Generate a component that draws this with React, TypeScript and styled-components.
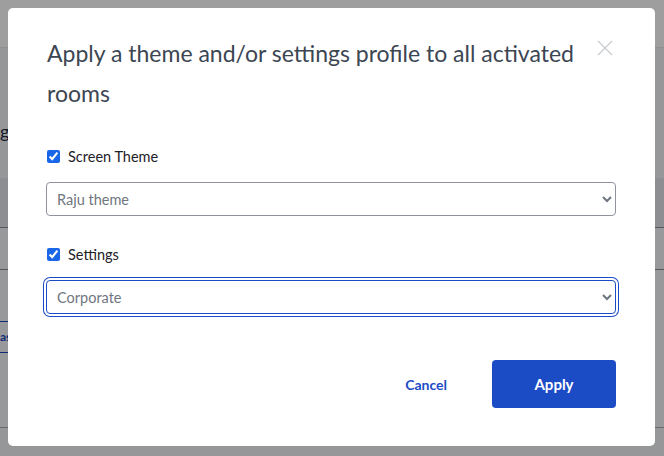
import React from 'react'
import styled, { createGlobalStyle } from 'styled-components'

const GlobalStyle = createGlobalStyle`
  html, body {
    margin: 0;
    padding: 0;
    width: 664px;
    height: 456px;
    overflow: hidden;
    font-family: Lato, 'Open Sans', Arial, sans-serif;
    background: #f3f4f6;
  }
  * {
    box-sizing: border-box;
  }
`

// ---- page behind the dialog ----

const Page = styled.div`
  display: flex;
  flex-direction: column;
  width: 664px;
  height: 456px;
`

const TopBar = styled.div`
  height: 48px;
  background: #fff;
  border-bottom: 1px solid #e3e5e8;
`

const PageHeading = styled.div`
  height: 130px;
  padding-top: 72px;
  font-size: 18px;
  color: #1f2a44;
`

const TableHead = styled.div`
  height: 50px;
  background: #e4e6ea;
  border-bottom: 1px solid #8b8f96;
`

const TableRow = styled.div<{ h: number }>`
  height: ${({ h }) => h}px;
  border-bottom: 1px solid #8b8f96;
  background: #f6f7f8;
`

const TabStrip = styled.div`
  display: flex;
  height: 158px;
  background: #f6f7f8;
  border-bottom: 1px solid #a9adb3;
  padding-top: 51px;
`

const ActiveTab = styled.div`
  height: 32px;
  width: 40px;
  border-top: 1px solid #2048c0;
  border-bottom: 1px solid #2048c0;
  color: #2048c0;
  font-weight: 700;
  font-size: 12px;
  line-height: 30px;
`

// ---- dialog ----

const Backdrop = styled.div`
  position: fixed;
  inset: 0;
  background: rgba(0, 0, 0, 0.38);
  display: flex;
  align-items: flex-start;
  justify-content: flex-start;
  padding: 8px 0 0 8px;
`

const Dialog = styled.div`
  width: 647px;
  height: 438px;
  background: #fff;
  border-radius: 5px;
  padding: 25px 39px 38px 38px;
  display: flex;
  flex-direction: column;
`

const HeaderRow = styled.div`
  display: flex;
  align-items: flex-start;
`

const Title = styled.h2`
  flex: 1;
  margin: 0;
  padding-left: 1px;
  padding-right: 16px;
  font-size: 23px;
  font-weight: 400;
  line-height: 40px;
  color: #3c4653;
`

const CloseButton = styled.button`
  border: none;
  background: none;
  padding: 0;
  margin: 7px 3px 0 0;
  width: 16px;
  height: 16px;
  cursor: pointer;
  display: flex;
`

const Section = styled.div<{ top: number }>`
  display: flex;
  flex-direction: column;
  margin-top: ${({ top }) => top}px;
`

const CheckRow = styled.label`
  display: flex;
  align-items: center;
  height: 20px;
  gap: 8px;
  font-size: 14.5px;
  color: #1d2127;
  padding-left: 1px;
`

const Check = styled.input`
  width: 13px;
  height: 13px;
  margin: 0;
  accent-color: #1a66e8;
`

const Select = styled.select<{ focused?: boolean }>`
  margin-top: 16px;
  height: 34px;
  width: 100%;
  border: 1px solid ${({ focused }) => (focused ? '#1c4bc6' : '#8f949c')};
  border-radius: 4px;
  padding: 0 6px;
  font-family: inherit;
  font-size: 14.5px;
  color: #6f7680;
  background: #fff;
  box-shadow: ${({ focused }) => (focused ? '0 0 0 2px #fff, 0 0 0 3px #1c4bc6' : 'none')};
  outline: none;
`

const Footer = styled.div`
  margin-top: auto;
  display: flex;
  justify-content: flex-end;
  align-items: center;
  gap: 45px;
`

const LinkButton = styled.button`
  border: none;
  background: none;
  padding: 0;
  font-family: inherit;
  font-size: 14px;
  font-weight: 700;
  color: #1c4bc6;
  cursor: pointer;
`

const PrimaryButton = styled.button`
  width: 124px;
  height: 48px;
  border: none;
  border-radius: 4px;
  background: #1c4bc6;
  color: #fff;
  font-family: inherit;
  font-size: 15px;
  font-weight: 700;
  cursor: pointer;
`

export default function App() {
  return (
    <>
      <GlobalStyle />
      <Page>
        <TopBar />
        <PageHeading>gc</PageHeading>
        <TableHead />
        <TableRow h={42} />
        <TabStrip>
          <ActiveTab>as</ActiveTab>
        </TabStrip>
      </Page>
      <Backdrop>
        <Dialog>
          <HeaderRow>
            <Title>Apply a theme and/or settings profile to all activated rooms</Title>
            <CloseButton aria-label="Close">
              <svg width="16" height="16" viewBox="0 0 16 16">
                <path d="M1 1 L15 15 M15 1 L1 15" stroke="#c8cbcf" strokeWidth="1.3" fill="none" />
              </svg>
            </CloseButton>
          </HeaderRow>
          <Section top={33}>
            <CheckRow>
              <Check type="checkbox" defaultChecked />
              Screen Theme
            </CheckRow>
            <Select defaultValue="raju">
              <option value="raju">Raju theme</option>
            </Select>
          </Section>
          <Section top={28}>
            <CheckRow>
              <Check type="checkbox" defaultChecked />
              Settings
            </CheckRow>
            <Select focused defaultValue="corporate">
              <option value="corporate">Corporate</option>
            </Select>
          </Section>
          <Footer>
            <LinkButton>Cancel</LinkButton>
            <PrimaryButton>Apply</PrimaryButton>
          </Footer>
        </Dialog>
      </Backdrop>
    </>
  )
}
